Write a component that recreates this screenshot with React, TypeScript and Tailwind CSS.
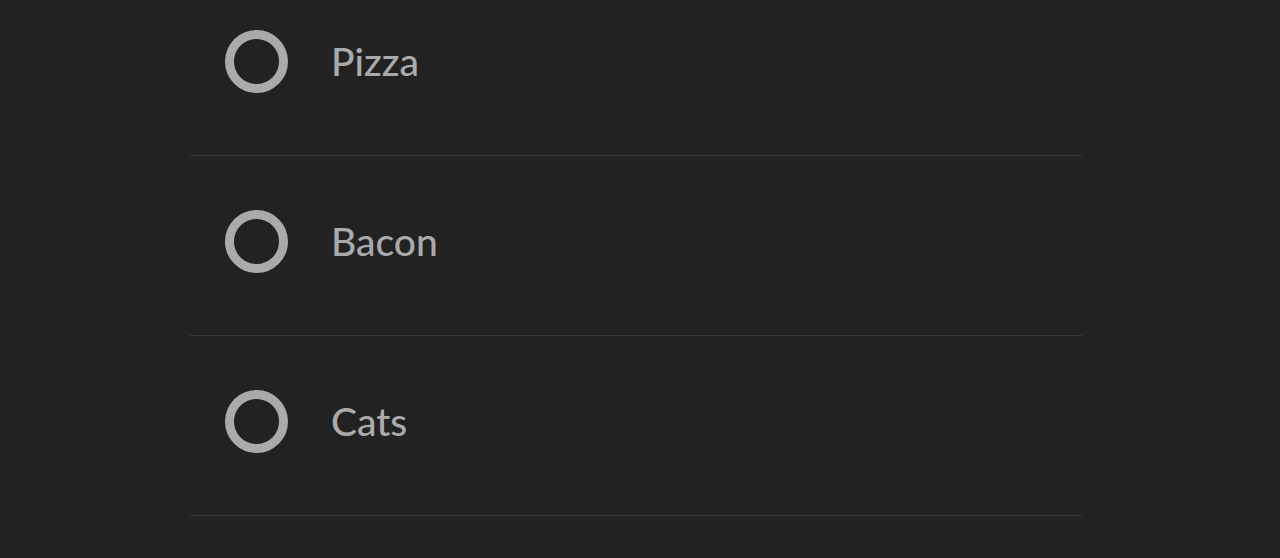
const items = ['Pizza', 'Bacon', 'Cats']

export default function App() {
  return (
    <div className="w-[1280px] h-[558px] overflow-hidden bg-[#222222]" style={{ fontFamily: 'Lato, sans-serif' }}>
      <ul className="ml-[190px] w-[892px] -mt-[24px]">
        {items.map((label) => (
          <li key={label} className="flex items-center h-[180px] pl-[35px] pb-[8px] border-b border-[#393939]">
            <span className="w-[63px] h-[63px] rounded-full border-[9px] border-[#aaaaaa] shrink-0" />
            <span className="ml-[43px] text-[39px] font-medium text-[#aaaaaa] leading-none">{label}</span>
          </li>
        ))}
      </ul>
    </div>
  )
}
